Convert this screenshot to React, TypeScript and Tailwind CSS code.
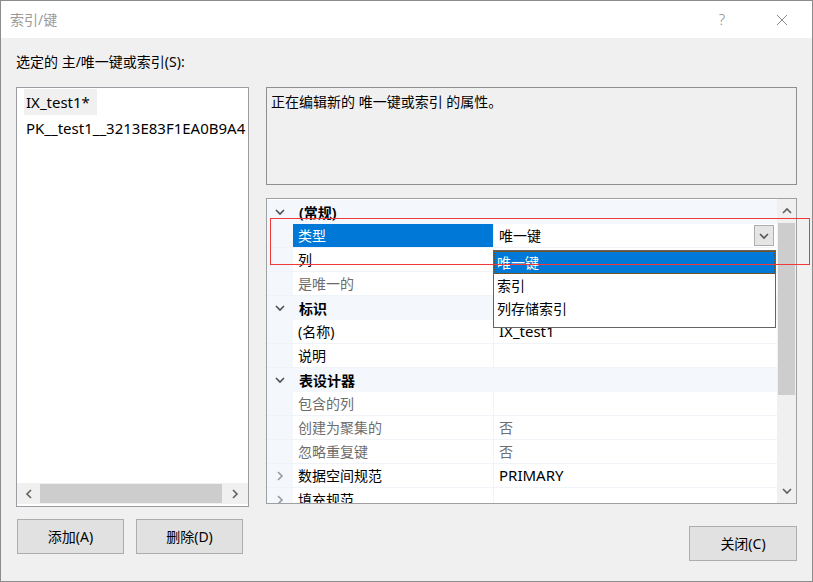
import React from 'react';

type GridRow =
  | { kind: 'cat'; label: string }
  | { kind: 'prop'; label: string; value?: string; disabled?: boolean; expandable?: boolean; selected?: boolean; combo?: boolean };

const rows: GridRow[] = [
  { kind: 'cat', label: '(常规)' },
  { kind: 'prop', label: '类型', value: '唯一键', selected: true, combo: true },
  { kind: 'prop', label: '列' },
  { kind: 'prop', label: '是唯一的', disabled: true },
  { kind: 'cat', label: '标识' },
  { kind: 'prop', label: '(名称)', value: 'IX_test1' },
  { kind: 'prop', label: '说明' },
  { kind: 'cat', label: '表设计器' },
  { kind: 'prop', label: '包含的列', disabled: true },
  { kind: 'prop', label: '创建为聚集的', value: '否', disabled: true },
  { kind: 'prop', label: '忽略重复键', value: '否', disabled: true },
  { kind: 'prop', label: '数据空间规范', value: 'PRIMARY', expandable: true },
  { kind: 'prop', label: '填充规范', expandable: true },
];

const font = { fontFamily: '"Noto Sans", "Noto Sans CJK SC", sans-serif' };

// 纯拉丁文本稍宽一些
const isLatin = (s?: string) => !!s && /^[\x20-\x7e]+$/.test(s);

// 小箭头
function Chevron({ dir, className }: { dir: 'up' | 'down' | 'left' | 'right'; className?: string }) {
  const pts = {
    down: '1,3 5,7 9,3',
    up: '1,7 5,3 9,7',
    left: '7,1 3,5 7,9',
    right: '3,1 7,5 3,9',
  }[dir];
  return (
    <svg width="10" height="10" viewBox="0 0 10 10" className={className}>
      <polyline points={pts} fill="none" stroke="currentColor" strokeWidth="1.6" />
    </svg>
  );
}

function Button({ label, className }: { label: string; className?: string }) {
  return (
    <div
      className={`flex items-center justify-center border border-[#adadad] bg-[#e1e1e1] text-[14px] text-black ${className ?? ''}`}
    >
      {label}
    </div>
  );
}

export default function App() {
  return (
    <div
      className="relative w-[813px] h-[582px] overflow-hidden bg-[#f0f0f0] border border-[#8c8c8c] flex flex-col"
      style={font}
    >
      {/* Title bar */}
      <div className="h-[37px] bg-white flex items-center justify-between pl-[9px] pr-[24px] shrink-0">
        <span className="text-[14px] text-[#9a9a9a]">索引/键</span>
        <div className="flex items-center gap-[51px] text-[#8a8a8a]">
          <span className="text-[15px] font-light">?</span>
          <svg width="12" height="12" viewBox="0 0 12 12">
            <path d="M1 1 L11 11 M11 1 L1 11" stroke="currentColor" strokeWidth="1" />
          </svg>
        </div>
      </div>

      {/* Body */}
      <div className="flex-1 px-[15px] pt-[14px] flex flex-col">
        <div className="text-[14px] text-black leading-[20px]">选定的 主/唯一键或索引(S):</div>

        <div className="flex gap-[17px] mt-[15px]">
          {/* Left column */}
          <div className="w-[233px] flex flex-col">
            <div className="h-[420px] border border-[#9a9ca2] bg-white flex flex-col">
              <div className="flex-1 pt-[1px] pl-[7px] text-[15px] text-black overflow-hidden">
                <div className="h-[26px] w-[73px] bg-[#f0f0f0] flex items-center pl-[2px]">IX_test1*</div>
                <div className="h-[26px] flex items-center pl-[2px] whitespace-nowrap">PK__test1__3213E83F1EA0B9A4</div>
              </div>
              <div className="h-[21px] bg-[#f0f0f0] flex items-center mb-[2px]">
                <div className="w-[23px] flex items-center justify-center text-[#606060]">
                  <Chevron dir="left" />
                </div>
                <div className="w-[182px] h-[19px] bg-[#cdcdcd]" />
                <div className="flex-1 flex items-center justify-center text-[#606060]">
                  <Chevron dir="right" />
                </div>
              </div>
            </div>
            <div className="flex gap-[12px] mt-[12px] pl-[1px]">
              <Button label="添加(A)" className="w-[107px] h-[35px]" />
              <Button label="删除(D)" className="w-[107px] h-[35px]" />
            </div>
          </div>

          {/* Right column */}
          <div className="flex-1 flex flex-col">
            <div className="h-[98px] border border-[#8e8e8e] bg-[#f0f0f0] px-[4px] pt-[3px] text-[14px] text-black">
              正在编辑新的 唯一键或索引 的属性。
            </div>

            <div className="h-[306px] mt-[13px] border border-[#a0a0a0] bg-white flex">
              <div className="flex-1 flex flex-col pt-[1px] overflow-hidden">
                {rows.map((r, i) =>
                  r.kind === 'cat' ? (
                    <div key={i} className="h-[24px] shrink-0 bg-[#f4f7fc] flex items-center">
                      <div className="w-[26px] flex items-center justify-center text-[#505050]">
                        <Chevron dir="down" />
                      </div>
                      <span className="pl-[6px] text-[14px] font-bold text-black">{r.label}</span>
                    </div>
                  ) : (
                    <div key={i} className="h-[24px] shrink-0 flex border-b border-[#f0f3f8]">
                      <div className="w-[26px] bg-[#f4f7fc] flex items-center justify-center text-[#9a9a9a]">
                        {r.expandable && <Chevron dir="right" />}
                      </div>
                      <div
                        className={`w-[200px] flex items-center pl-[5px] text-[14px] ${
                          r.selected ? 'bg-[#0078d7] text-white' : r.disabled ? 'text-[#6d6d6d]' : 'text-black'
                        }`}
                      >
                        {r.label}
                      </div>
                      <div
                        className={`flex-1 flex items-center justify-between pl-[5px] pr-[3px] border-l border-[#f0f3f8] ${
                          isLatin(r.value) ? 'text-[15px]' : 'text-[14px]'
                        } ${r.disabled ? 'text-[#6d6d6d]' : 'text-black'}`}
                      >
                        <span>{r.value}</span>
                        {r.combo && (
                          <div className="w-[20px] h-[21px] border border-[#adadad] bg-[#e5e5e5] flex items-center justify-center text-[#555]">
                            <Chevron dir="down" />
                          </div>
                        )}
                      </div>
                    </div>
                  )
                )}
              </div>

              {/* vertical scrollbar */}
              <div className="w-[19px] bg-[#f0f0f0] flex flex-col items-center">
                <div className="h-[24px] flex items-center justify-center text-[#606060]">
                  <Chevron dir="up" />
                </div>
                <div className="w-[17px] h-[172px] bg-[#cdcdcd]" />
                <div className="flex-1" />
                <div className="h-[24px] flex items-center justify-center text-[#606060]">
                  <Chevron dir="down" />
                </div>
              </div>
            </div>

            <div className="flex justify-end mt-[22px]">
              <Button label="关闭(C)" className="w-[108px] h-[35px]" />
            </div>
          </div>
        </div>
      </div>

      {/* Dropdown list (open combo) */}
      <div className="absolute left-[492px] top-[249px] w-[283px] h-[78px] border border-[#646464] bg-white text-[14px] text-black">
        <div className="h-[23px] bg-[#0078d7] text-white flex items-center pl-[3px] outline outline-1 outline-dotted outline-[#6b4a1a] -outline-offset-1">
          唯一键
        </div>
        <div className="h-[23px] flex items-center pl-[3px]">索引</div>
        <div className="h-[23px] flex items-center pl-[3px]">列存储索引</div>
      </div>

      {/* Red annotation frame */}
      <div className="absolute left-[269px] top-[217px] w-[540px] h-[47px] border border-[#f03a3a]" />
    </div>
  );
}
